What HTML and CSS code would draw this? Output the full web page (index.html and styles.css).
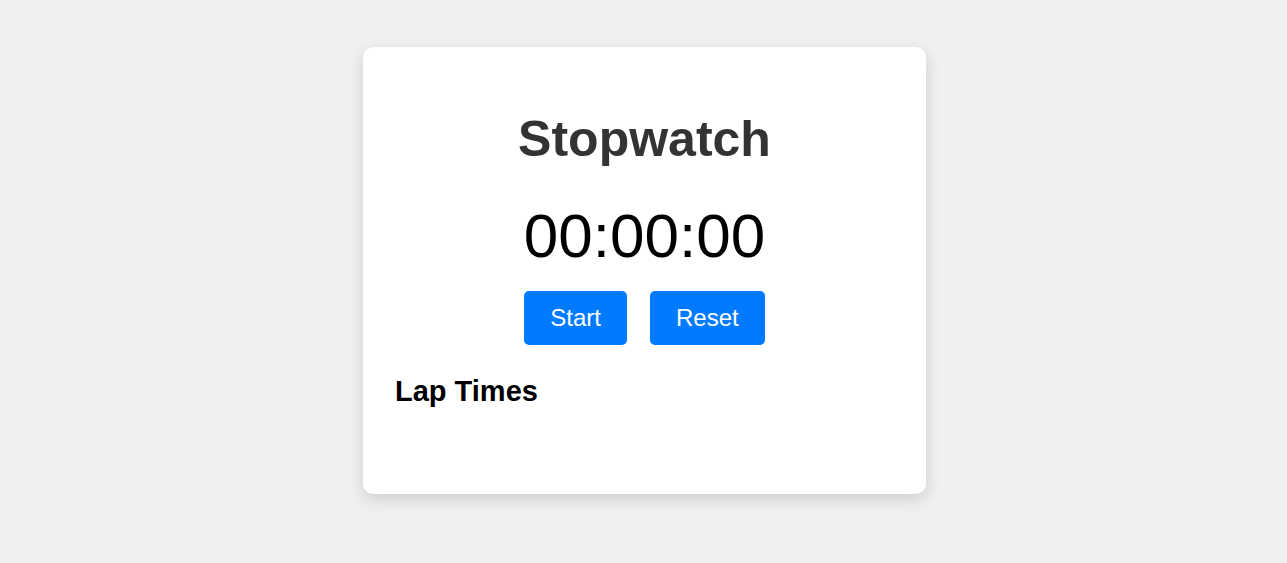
FILE: index.html
```html
<!DOCTYPE html>
<html lang="en">
<head>
<meta charset="utf-8">
<title>Stopwatch</title>
<link rel="stylesheet" href="styles.css">
</head>
<body>
<div class="card">
  <h1 class="title">Stopwatch</h1>
  <div class="display">00:00:00</div>
  <div class="controls">
    <button class="btn">Start</button>
    <button class="btn">Reset</button>
  </div>
  <h2 class="laps-title">Lap Times</h2>
  <ul class="laps"></ul>
</div>
</body>
</html>
```
FILE: styles.css
```css
html, body {
  margin: 0;
  padding: 0;
}
body {
  background: #f0f0f0;
  font-family: "Liberation Sans", Arial, sans-serif;
  display: flex;
  justify-content: center;
  align-items: flex-start;
  padding: 47px 0 0 2px;
  min-height: 100vh;
  box-sizing: border-box;
}
.card {
  background: #ffffff;
  width: 499px;
  padding: 32px;
  border-radius: 10px;
  box-shadow: 0 5px 15px rgba(0, 0, 0, 0.15);
  text-align: center;
  height: 383px;
}
.title {
  font-size: 50px;
  color: #333333;
  margin: 32px 0 31px;
  line-height: 1.15;
}
.display {
  font-size: 62px;
  color: #000000;
  line-height: 1.15;
  margin-top: 5px;
}
.controls {
  display: flex;
  justify-content: center;
  gap: 23px;
  margin-top: 20px;
}
.btn {
  font-family: "Liberation Sans", Arial, sans-serif;
  font-size: 24px;
  line-height: 28px;
  padding: 13px 26px;
  background: #007bff;
  color: #ffffff;
  border: none;
  border-radius: 5px;
}
.laps-title {
  text-align: left;
  font-size: 29px;
  margin: 30px 0 0;
  color: #000;
}
.laps {
  margin: 0;
  padding: 0;
  list-style: none;
}
```
